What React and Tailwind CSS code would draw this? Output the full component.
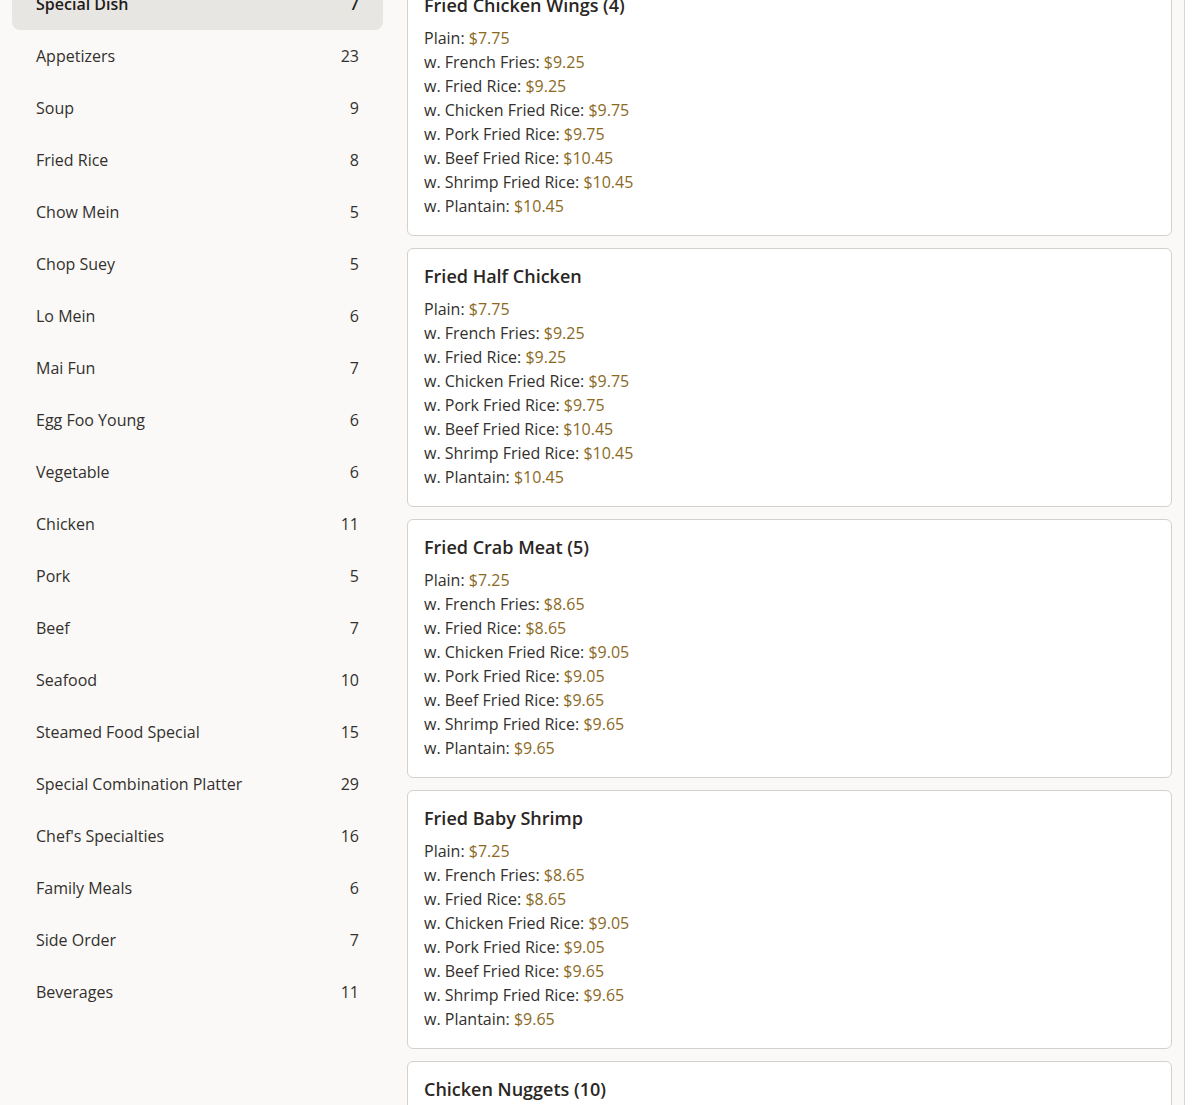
const categories = [
  { name: "Special Dish", count: 7 },
  { name: "Appetizers", count: 23 },
  { name: "Soup", count: 9 },
  { name: "Fried Rice", count: 8 },
  { name: "Chow Mein", count: 5 },
  { name: "Chop Suey", count: 5 },
  { name: "Lo Mein", count: 6 },
  { name: "Mai Fun", count: 7 },
  { name: "Egg Foo Young", count: 6 },
  { name: "Vegetable", count: 6 },
  { name: "Chicken", count: 11 },
  { name: "Pork", count: 5 },
  { name: "Beef", count: 7 },
  { name: "Seafood", count: 10 },
  { name: "Steamed Food Special", count: 15 },
  { name: "Special Combination Platter", count: 29 },
  { name: "Chef's Specialties", count: 16 },
  { name: "Family Meals", count: 6 },
  { name: "Side Order", count: 7 },
  { name: "Beverages", count: 11 },
]

const labels = [
  "Plain",
  "w. French Fries",
  "w. Fried Rice",
  "w. Chicken Fried Rice",
  "w. Pork Fried Rice",
  "w. Beef Fried Rice",
  "w. Shrimp Fried Rice",
  "w. Plantain",
]

const items = [
  { title: "Fried Chicken Wings (4)", prices: ["7.75", "9.25", "9.25", "9.75", "9.75", "10.45", "10.45", "10.45"] },
  { title: "Fried Half Chicken", prices: ["7.75", "9.25", "9.25", "9.75", "9.75", "10.45", "10.45", "10.45"] },
  { title: "Fried Crab Meat (5)", prices: ["7.25", "8.65", "8.65", "9.05", "9.05", "9.65", "9.65", "9.65"] },
  { title: "Fried Baby Shrimp", prices: ["7.25", "8.65", "8.65", "9.05", "9.05", "9.65", "9.65", "9.65"] },
  { title: "Chicken Nuggets (10)", prices: ["6.95", "8.45", "8.45", "8.95", "8.95", "9.65", "9.65", "9.65"] },
]

export default function App() {
  return (
    <div className="h-[1105px] overflow-hidden bg-[#faf9f7] font-['Open_Sans',sans-serif] text-[#33302d] flex">
      <div className="flex flex-1 -mt-[22px]">
        <aside className="w-[395px] shrink-0 px-3">
          {categories.map((c, i) => (
            <div
              key={c.name}
              className={`flex h-[52px] items-center justify-between rounded-lg px-6 text-base ${
                i === 0 ? "bg-[#e8e6e3] font-semibold text-[#1f1c1a]" : ""
              }`}
            >
              <span>{c.name}</span>
              <span>{c.count}</span>
            </div>
          ))}
        </aside>

        <main className="flex-1 pl-3 pr-3 flex flex-col gap-3 -mt-px">
          {items.map((item) => (
            <article key={item.title} className="rounded-md border border-[#d4d1cd] bg-white px-4 pt-4 pb-[17px]">
              <h3 className="text-lg font-semibold leading-[22px] text-[#2a2623]">{item.title}</h3>
              <div className="mt-2.5 text-base leading-6">
                {labels.map((l, i) => (
                  <p key={l}>
                    {l}: <span className="text-[#8b6a1f]">${item.prices[i]}</span>
                  </p>
                ))}
              </div>
            </article>
          ))}
        </main>
      </div>
      <div className="w-5 shrink-0 border-l border-[#d9d7d4] bg-white" />
    </div>
  )
}
